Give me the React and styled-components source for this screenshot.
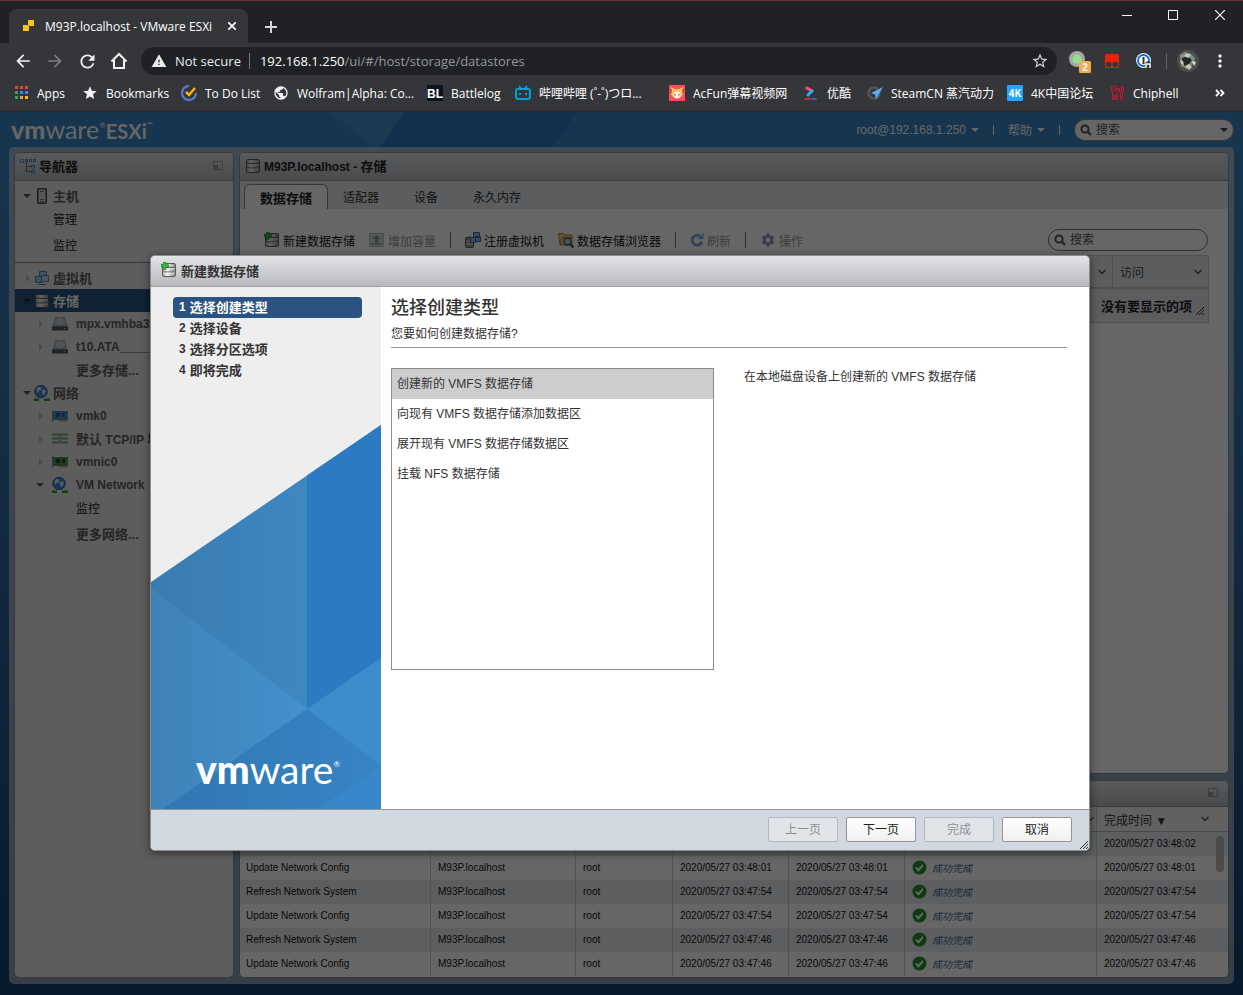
import React from 'react';
import styled, { createGlobalStyle, css } from 'styled-components';
import { MdArrowBack, MdArrowForward, MdRefresh, MdWarning, MdStarBorder, MdStar, MdMoreVert, MdPublic, MdSettings } from 'react-icons/md';

const uiFont = '"Liberation Sans", "Noto Sans CJK SC", sans-serif';
const chromeFont = '"Open Sans", "Noto Sans CJK SC", sans-serif';

const GlobalStyle = createGlobalStyle`
  *, *::before, *::after { box-sizing: border-box; }
  body { margin: 0; background: #202124; font-family: ${uiFont}; font-size: 12px; color: #000; }
  button, input { font: inherit; color: inherit; }
  button { border: 0; background: none; padding: 0; cursor: pointer; }
  ul { list-style: none; margin: 0; padding: 0; }
  a { color: inherit; text-decoration: none; }
  svg { display: block; flex: none; }
`;

const Window = styled.div`
  min-height: 100vh;
  display: flex;
  flex-direction: column;
  border-top: 1px solid #6b2f38;
`;

/* ---------- browser frame ---------- */

const TabStrip = styled.div`
  display: flex;
  align-items: flex-end;
  height: 42px;
  padding-left: 9px;
  background: #202124;
  font-family: ${chromeFont};
  color: #fff;
`;

const BrowserTab = styled.div`
  display: flex;
  align-items: center;
  width: 239px;
  height: 34px;
  padding: 0 10px 0 12px;
  border-radius: 8px 8px 0 0;
  background: #35363a;
  font-size: 12px;
`;

const TabTitle = styled.span`
  flex: 1;
  margin-left: 8px;
  white-space: nowrap;
  font-size: 12px;
`;

const IconButton = styled.button`
  display: flex;
  align-items: center;
  justify-content: center;
  width: ${p => p.$w || 32}px;
  height: ${p => p.$h || 32}px;
  color: ${p => (p.$muted ? '#7b7c7f' : '#f1f3f4')};
`;

const NewTab = styled(IconButton)`
  margin-left: 7px;
`;

const WindowButtons = styled.div`
  display: flex;
  align-self: flex-start;
  margin-left: auto;
`;

const AddressRow = styled.div`
  display: flex;
  align-items: center;
  height: 36px;
  padding: 0 2px 0 7px;
  background: #35363a;
  font-family: ${chromeFont};
`;

const Omnibox = styled.div`
  flex: 1;
  display: flex;
  align-items: center;
  height: 28px;
  margin: 0 7px 0 6px;
  padding: 0 8px 0 10px;
  border-radius: 14px;
  background: #202124;
  color: #e8eaed;
  font-size: 13px;
  white-space: nowrap;
`;

const Insecure = styled.span`
  margin: 0 10px 0 8px;
  padding-right: 8px;
  border-right: 1px solid #76777a;
  line-height: 16px;
`;

const Url = styled.span`
  flex: 1;
  color: #96989b;
  b { font-weight: 400; color: #fff; }
`;

const Divider = styled.i`
  width: 1px;
  height: 16px;
  margin: 0 10px 0 6px;
  background: #606164;
`;

const Bookmarks = styled.nav`
  display: flex;
  align-items: center;
  height: 33px;
  padding: 0 18px 4px 15px;
  border-bottom: 1px solid #28292c;
  background: #35363a;
  color: #fff;
  font-family: ${chromeFont};
  font-size: 12px;
  overflow: hidden;
`;

const Bookmark = styled.a`
  flex: 0 0 ${p => p.$w}px;
  display: flex;
  align-items: center;
  gap: 8px;
  white-space: nowrap;
`;

const More = styled.button`
  margin-left: auto;
`;

/* ---------- web client ---------- */

const Client = styled.div`
  position: relative;
  flex: 1;
  display: flex;
  flex-direction: column;
  padding: 0 9px 11px;
  background: linear-gradient(#3a85c2 0, #3a85c2 35px, #2d6ca3 45%, #14416e 100%);
`;

const HeaderArt = styled.svg`
  position: absolute;
  left: 0;
  top: 0;
`;

const ClientHeader = styled.header`
  position: relative;
  display: flex;
  align-items: center;
  height: 35px;
  padding-left: 2px;
  color: #fff;
`;

const Logo = styled.span`
  display: inline-flex;
  align-items: baseline;
  color: #fff;
  font-family: Lato, ${uiFont};
  font-size: ${p => p.$size}px;
  font-weight: 400;
  line-height: 1;
  b { font-weight: 900; }
  sup {
    align-self: flex-start;
    font-size: 8px;
    line-height: ${p => (p.$size > 30 ? 28 : 16)}px;
  }
  em { font-size: 20px; font-style: normal; font-weight: 700; }
`;

const HeaderStart = styled.div`
  flex: 1;
`;

const HeaderMenu = styled.button`
  display: flex;
  align-items: center;
  gap: 5px;
`;

const HeaderBar = styled.i`
  width: 1px;
  height: 10px;
  margin: 0 14px;
  background: #fff;
`;

const SearchBox = styled.label`
  display: flex;
  align-items: center;
  gap: 4px;
  width: 160px;
  height: 22px;
  padding: 0 5px;
  border: 1px solid ${p => (p.$dark ? '#777' : '#888')};
  border-radius: 11px;
  background: #fff;
  color: #555;
  input {
    flex: 1;
    min-width: 0;
    border: 0;
    outline: 0;
    padding: 0;
    background: none;
  }
  input::placeholder { color: #555; opacity: 1; }
`;

const Frame = styled.div`
  position: relative;
  flex: 1;
  display: grid;
  grid-template-columns: 220px minmax(0, 1fr);
  grid-template-rows: minmax(0, 1fr) 198px;
  gap: 6px 5px;
  padding: 5px 5px 6px;
  border-radius: 5px;
  background: linear-gradient(#9db8d0, #8c9bac);
`;

const Panel = styled.section`
  display: flex;
  flex-direction: column;
  border: 1px solid #8b8d90;
  border-radius: 5px;
  overflow: hidden;
  background: ${p => p.$bg || '#fff'};
  grid-row: ${p => (p.$tall ? 'span 2' : 'auto')};
`;

const PanelHeader = styled.header`
  flex: none;
  display: flex;
  align-items: center;
  gap: 3px;
  height: ${p => p.$h || 28}px;
  padding: 0 10px 2px 5px;
  border-bottom: 1px solid #909294;
  background: linear-gradient(#e0e2e5, #b8babd);
  color: #222;
  font-weight: 700;
  svg:last-child:not(:first-child), svg:only-child { margin-left: auto; }
`;

const PanelTitle = styled.span`
  font-size: 12px;
  white-space: nowrap;
`;

const Zh = styled.span`
  font-size: 13px;
`;

const Tree = styled.ul`
  padding: ${p => p.$top}px 0 4px;
  border-top: ${p => (p.$ruled ? '1px solid #888' : '0')};
`;

const TreeRow = styled.li`
  display: flex;
  align-items: center;
  height: ${p => (p.$tall ? 28 : 23)}px;
  padding-left: ${p => (p.$depth ? 20 : 7)}px;
  white-space: nowrap;
  font-weight: ${p => (p.$plain ? 400 : 700)};
  color: ${p => (p.$plain ? '#222' : '#5c5c5c')};
  ${p => p.$selected && css`
    background: #2a5381;
    color: #fff;
  `}
`;

const ArrowCell = styled.span`
  width: 10px;
  margin-right: ${p => (p.$depth ? 7 : 2)}px;
`;

const IconCell = styled.span`
  display: flex;
  justify-content: center;
  width: 16px;
  margin-right: ${p => (p.$depth ? 8 : 3)}px;
`;

const Tabs = styled.div`
  display: flex;
  align-items: flex-end;
  height: 28px;
  padding-left: 4px;
  background: #e5e8ec;
`;

const Tab = styled.button`
  height: 25px;
  padding: 0 20px 0 15px;
  font-size: 12px;
  color: #333;
  ${p => p.$active && css`
    padding: 0 15px;
    border: 1px solid #85878a;
    border-bottom: 0;
    border-radius: 6px 6px 0 0;
    background: #fff;
    color: #222;
    font-size: 13px;
    font-weight: 700;
  `}
`;

const Toolbar = styled.div`
  display: flex;
  align-items: center;
  gap: 14px;
  height: 46px;
  padding: 16px 20px 0 24px;
`;

const ToolButton = styled.button`
  display: flex;
  align-items: center;
  gap: 3px;
  white-space: nowrap;
  color: ${p => (p.disabled ? '#999' : '#111')};
`;

const ToolbarBar = styled.i`
  width: 1px;
  height: 16px;
  background: #777;
`;

const ToolbarEnd = styled.div`
  margin-left: auto;
`;

const Table = styled.table`
  table-layout: fixed;
  width: 100%;
  border-collapse: separate;
  border-spacing: 0;
  th, td { padding: 0; text-align: left; font-weight: 400; white-space: nowrap; }
`;

const GridWrap = styled.div`
  margin: 0 19px 0 19px;
  border: 1px solid #cacaca;
`;

const GridTable = styled(Table)`
  background: #e6e9ec;
  th { height: 33px; padding: 0 6px 0 7px; border-right: 1px solid #c4c6c8; border-bottom: 2px solid #c4c6c8; color: #444; }
  th:last-child { border-right: 0; }
  td { height: 33px; padding-right: 4px; }
`;

const HeadCell = styled.span`
  display: flex;
  align-items: center;
  justify-content: space-between;
  padding-right: ${p => p.$end || 0}px;
  svg:only-child { margin-left: auto; }
`;

const EmptyNote = styled.div`
  display: flex;
  justify-content: flex-end;
  align-items: center;
  gap: 4px;
  font-size: 13px;
  font-weight: 700;
  color: #222;
  svg { align-self: flex-end; }
`;

const TaskArea = styled.div`
  position: relative;
`;

const TaskTable = styled(Table)`
  font-size: 10px;
  th { height: 25px; padding-left: 7px; border-bottom: 1px solid #b4b6b8; background: #f2f2f2; font-size: 12px; color: #333; }
  th + th, td { border-left: 1px solid #ccc; }
  td { height: 24px; padding: 0 0 2px 7px; color: #111; }
  td:first-child { border-left: 0; padding-left: 6px; }
  tbody tr:nth-child(odd) td { background: #e8ebef; }
`;

const Result = styled.span`
  display: flex;
  align-items: center;
  gap: 5px;
  color: #3c6791;
  font-size: 10px;
  font-style: italic;
`;

const ScrollThumb = styled.div`
  position: absolute;
  right: 4px;
  top: 29px;
  width: 8px;
  height: 36px;
  border-radius: 4px;
  background: #bbb;
`;

/* ---------- dialog ---------- */

const Backdrop = styled.div`
  position: absolute;
  inset: 0;
  display: flex;
  align-items: center;
  justify-content: center;
  padding: 0 3px 1px 0;
  background: rgba(0, 0, 0, 0.6);
`;

const Dialog = styled.section`
  display: flex;
  flex-direction: column;
  width: min(940px, calc(100% - 40px));
  min-height: 596px;
  border: 1px solid #8c8c8c;
  border-radius: 5px;
  overflow: hidden;
  background: #fff;
  color: #333;
  box-shadow: 0 2px 8px rgba(0, 0, 0, 0.5);
`;

const DialogHeader = styled.header`
  display: flex;
  align-items: center;
  gap: 4px;
  height: 31px;
  padding: 0 0 2px 10px;
  border-bottom: 1px solid #a0a0a2;
  background: linear-gradient(#e2e4e7, #b8b9bd);
  font-size: 13px;
  font-weight: 700;
`;

const DialogBody = styled.div`
  flex: 1;
  display: flex;
`;

const Side = styled.aside`
  position: relative;
  display: flex;
  flex-direction: column;
  justify-content: space-between;
  width: 230px;
  background: #eee;
`;

const Steps = styled.ol`
  list-style: none;
  margin: 0;
  padding: 10px 19px 0 22px;
`;

const Step = styled.button`
  display: flex;
  align-items: center;
  gap: 4px;
  width: 100%;
  height: 21px;
  padding: 0 0 2px 6px;
  border-radius: 4px;
  font-size: 12px;
  font-weight: 700;
  color: ${p => (p.$active ? '#fff' : '#333')};
  background: ${p => (p.$active ? '#2a5381' : 'none')};
`;

const SideLogo = styled.div`
  position: absolute;
  left: 45px;
  bottom: 20px;
`;

const Content = styled.div`
  flex: 1;
  padding: 8px 22px 0 10px;
`;

const Title = styled.h1`
  margin: 0;
  font-family: ${uiFont};
  font-size: 18px;
  font-weight: 500;
  line-height: 26px;
`;

const Subtitle = styled.p`
  margin: 0;
  padding: 2px 0;
  border-bottom: 1px solid #929292;
  line-height: 22px;
`;

const Columns = styled.div`
  display: flex;
  gap: 30px;
  margin-top: 20px;
`;

const TypeList = styled.ul`
  width: 323px;
  height: 302px;
  border: 1px solid #8c8c8c;
`;

const TypeOption = styled.button`
  display: block;
  width: 100%;
  height: 30px;
  padding: 0 0 3px 5px;
  text-align: left;
  background: ${p => (p.$selected ? '#cdcdcd' : '#fff')};
`;

const Description = styled.p`
  margin: 0;
  line-height: 18px;
`;

const DialogFooter = styled.footer`
  position: relative;
  display: flex;
  align-items: center;
  justify-content: flex-end;
  gap: 8px;
  height: 41px;
  padding: 0 17px 2px 0;
  border-top: 1px solid #929496;
  background: #d1d8e0;
`;

const Grip = styled.span`
  position: absolute;
  right: 1px;
  bottom: 1px;
`;

const FooterButton = styled.button`
  width: 70px;
  height: 25px;
  padding-bottom: 2px;
  border: 1px solid #949494;
  border-radius: 2px;
  background: linear-gradient(#fff, #f0f0f0);
  color: #222;
  &:disabled { border-color: #b4b8be; background: #e1e5ea; color: #8e9196; }
`;

/* ---------- drawings ---------- */

const Caret = ({ color = '#fff' }) => (
  <svg width="8" height="4" viewBox="0 0 8 4"><path d="M0 0h8L4 4z" fill={color} /></svg>
);

const Arrow = ({ open, dark }) => (open
  ? <svg width="10" height="8" viewBox="0 0 10 8"><path d="M1 2h8L5 6z" fill={dark ? '#222' : '#555'} /></svg>
  : <svg width="10" height="10" viewBox="0 0 10 10"><path d="M4 1v8l4-4z" fill="#bbb" /></svg>);

const Chevron = () => (
  <svg width="8" height="6" viewBox="0 0 8 6"><path d="M0.5 1 4 4.500 7.500 1" fill="none" stroke="#555" strokeWidth="1.500" /></svg>
);

const Magnifier = () => (
  <svg width="12" height="12" viewBox="0 0 12 12" fill="none" stroke="#555" strokeWidth="2"><circle cx="5" cy="5" r="3.600" /><path d="m7.600 7.600 3.400 3.400" strokeWidth="2.400" /></svg>
);

const GripMark = () => (
  <svg width="8" height="8" viewBox="0 0 8 8"><path d="M0 8 8 0M3 8l5-5M6 8l2-2" stroke="#333" strokeWidth="1" /></svg>
);

const PanelToggle = () => (
  <svg width="10" height="9" viewBox="0 0 10 9"><path d="M.5.5h9v8h-9z" fill="none" stroke="#999" /><path d="M1 4h4v4H1z" fill="#999" /></svg>
);

const Disks = ({ plus }) => (
  <svg width="16" height="16" viewBox="0 0 16 16">
    <defs>
      <linearGradient id="metal">
        <stop offset="0" stopColor="#a2a2a2" />
        <stop offset=".35" stopColor="#f4f4f4" />
        <stop offset="1" stopColor="#8c8c8c" />
      </linearGradient>
    </defs>
    <rect x="1.500" y="1.500" width="13" height="13" rx="1.500" fill="url(#metal)" stroke="#5a5a5a" />
    <path d="M2 5.500h12M2 10h12" stroke="#5a5a5a" />
    <path d="M2 6.500h12M2 11h12" stroke="#fff" strokeWidth=".6" />
    {plus && <path d="M2.500 0h2.500v2.500h2.500V5H5v2.500H2.500V5H0V2.500h2.500z" fill="#35c03a" stroke="#1c7a22" strokeWidth=".6" />}
  </svg>
);

const NavIcon = () => (
  <svg width="16" height="16" viewBox="0 0 16 16" fill="none" stroke="#3c7fba">
    <path d="M.5 1.500h3v3h-3z" stroke="#44a0c8" /><path d="M5.500 1.500h2v2h-2zM9.500 1.500h2v2h-2zM13.500 1.500h2v2h-2z" />
    <path d="M6.500 4v9.500H11M6.500 8.500H11" stroke="#666" /><path d="M11.500 7.500h3v2.500h-3zM11.500 12.500h3V15h-3z" />
  </svg>
);

const HostIcon = () => (
  <svg width="10" height="16" viewBox="0 0 10 16"><rect x=".75" y=".75" width="8.500" height="14.500" rx="1" fill="#ddd" stroke="#444" strokeWidth="1.500" /><path d="M3 3.500h4M3 11.500h4M3 13.500h4" stroke="#555" strokeWidth=".8" /></svg>
);

const VmIcon = () => (
  <svg width="15" height="14" viewBox="0 0 15 14" fill="#a9cbe8" stroke="#4a86bf"><path d="M4.500.5h7v6h-7z" /><path d="M.5 5.500h7v6h-7z" /><path d="M6.500 4.500h7v6h-7z" fill="#c0d9ee" /><path d="M3 13.500h8" /></svg>
);

const DriveIcon = () => (
  <svg width="16" height="14" viewBox="0 0 16 14"><path d="M3 0h10l2.500 10H.500z" fill="#a4adb5" /><ellipse cx="8" cy="4.500" rx="5" ry="3.500" fill="#ccd4da" /><path d="M0 9.500h16v4H0z" fill="#50585d" /><path d="M11.500 11h2.500v1h-2.500z" fill="#4fd04f" /></svg>
);

const GlobeIcon = () => (
  <svg width="16" height="16" viewBox="0 0 16 16"><circle cx="7" cy="6.500" r="6.200" fill="#4f86d6" stroke="#2458a8" /><path d="M3 3q3-2 4 0t-2 3-1 3Q2 7 3 3zM8 5q3-1 4 1-1 3-3 4-1-2-1-5z" fill="#d9e8fb" /><path d="M0 13.500h16v2.500H0z" fill="#12a512" /><path d="M5 13h5v3H5z" fill="#eee" /></svg>
);

const CardIcon = ({ green }) => (
  <svg width="16" height="12" viewBox="0 0 16 12"><path d="M1 1h15v9H1z" fill={green ? '#4d9463' : '#4b8fcc'} /><path d="M0 0h1v12H0z" fill="#888" /><path d="M4 3h4v4H4zM10 3h3v4h-3z" fill={green ? '#26462f' : '#2a5f94'} /><path d="M7 10h8v1.500H7z" fill="#c8a850" /></svg>
);

const StackIcon = () => (
  <svg width="16" height="11" viewBox="0 0 16 11"><path d="M0 1.500h16M0 5.500h16M0 9.500h16" stroke="#6fae70" strokeWidth="2" /><path d="M6 0h4v11H6z" fill="#a9b0b8" opacity=".8" /></svg>
);

const GrowIcon = () => (
  <svg width="16" height="14" viewBox="0 0 16 14"><path d="M.5.5h14v13H.5z" fill="#d4dcd8" stroke="#b5bdb9" /><path d="M7.500 2 12 6H9v4H6V6H3z" fill="#8d9a94" /><path d="M2 11h11" stroke="#9aa" strokeWidth="2" /></svg>
);

const RegisterIcon = () => (
  <svg width="16" height="16" viewBox="0 0 16 16"><path d="M.5 6q4-2 8 0v9q-4 1.500-8 0z" fill="#999" stroke="#555" /><path d="M1 9h7M1 12h7" stroke="#eee" /><path d="M8.500.5h6v5h-6zM5.500 5.500h5v5h-5zM10.500 4.500h5v5h-5z" fill="#8ebce4" stroke="#2a6db0" /></svg>
);

const BrowseIcon = () => (
  <svg width="16" height="16" viewBox="0 0 16 16"><path d="M.5 1.500h5l1.500 1.500h7v10H2z" fill="#f2d58c" stroke="#ad8230" /><path d="M2 13 4 5.500h11.500" fill="none" stroke="#ad8230" /><circle cx="9.500" cy="9.500" r="3.500" fill="#b6d6ee" stroke="#557" strokeWidth="1.400" /><path d="m12 12 3.500 3.500" stroke="#445" strokeWidth="2" /></svg>
);

const SyncIcon = () => (
  <svg width="14" height="14" viewBox="0 0 14 14"><path d="M12 8.500A5 5 0 1 1 10 3" fill="none" stroke="#7fa8d4" strokeWidth="2.800" /><path d="M13.500 0v6h-6z" fill="#7fa8d4" /></svg>
);

const Check = () => (
  <svg width="15" height="15" viewBox="0 0 15 15"><circle cx="7.500" cy="7.500" r="7" fill="#22912c" /><path d="m4 7.500 2.500 2.700L11 5" fill="none" stroke="#fff" strokeWidth="2" /></svg>
);

const Art = () => (
  <svg width="230" height="384" viewBox="0 0 230 384">
    <defs>
      <linearGradient id="ga"><stop offset="0" stopColor="#3a7cb1" /><stop offset="1" stopColor="#3f8cc8" /></linearGradient>
      <linearGradient id="gb"><stop offset="0" stopColor="#3e82b8" /><stop offset="1" stopColor="#4391cd" /></linearGradient>
      <linearGradient id="gc"><stop offset="0" stopColor="#3077b2" /><stop offset="1" stopColor="#3784c5" /></linearGradient>
    </defs>
    <path d="M0 157 230 0v384H0z" fill="url(#ga)" />
    <path d="M156 50.500 230 0v233l-74 51z" fill="#2b7ac2" />
    <path d="M0 163 156 284 12 384H0z" fill="url(#gb)" />
    <path d="M156 284 230 336v48H12z" fill="url(#gc)" />
    <path d="M156 284 230 233v108z" fill="#3e8ccb" />
    <path d="M230 341v43h-63z" fill="#3987c8" />
  </svg>
);

const AppsIcon = () => (
  <svg width="14" height="14" viewBox="0 0 14 14"><path d="M0 0h3v3H0zM5 0h3v3H5zM10 0h3v3h-3z" fill="#ea4335" /><path d="M0 5h3v3H0zM0 10h3v3H0z" fill="#34a853" /><path d="M5 5h3v3H5zM10 5h3v3h-3z" fill="#4285f4" /><path d="M5 10h3v3H5z" fill="#e8a33d" /><path d="M10 10h3v3h-3z" fill="#fbbc05" /></svg>
);

const bookmarks = [
  ['Apps', 67, <AppsIcon />],
  ['Bookmarks', 99, <MdStar size={16} color="#f1f3f4" />],
  ['To Do List', 92, <svg width="16" height="16" viewBox="0 0 16 16" fill="none"><path d="M8 1a7 7 0 1 0 7 7" stroke="#5b7fe0" strokeWidth="2" /><path d="m5 7 3 3 6-7" stroke="#fdb10b" strokeWidth="2.500" /></svg>],
  ['Wolfram|Alpha: Co...', 154, <MdPublic size={16} color="#f1f3f4" />],
  ['Battlelog', 88, <svg width="16" height="16" viewBox="0 0 16 16"><path d="M0 0h16v16H0z" fill="#0b151f" /><text x="8" y="12.500" textAnchor="middle" fontSize="12" fontWeight="700" fontFamily="Liberation Sans, sans-serif" fill="#fff">BL</text></svg>],
  ['哔哩哔哩 (˚-˚)つロ...', 154, <svg width="16" height="16" viewBox="0 0 16 16" fill="none" stroke="#00a1d6" strokeWidth="2"><rect x="1" y="4" width="14" height="10" rx="2" /><path d="m4 1 2 2.500M12 1l-2 2.500M5 8v2M11 8v2" /></svg>],
  ['AcFun弹幕视频网', 134, <svg width="16" height="16" viewBox="0 0 16 16"><path d="M0 0h16v16H0z" fill="#fd4c5d" /><path d="m2 2 4 2h4l4-2v5q0 6-6 6T2 7z" fill="#f8c060" /><circle cx="8" cy="10" r="3.500" fill="#fff2e0" /><path d="M2 4v4M14 4v4M6 9v1.500M10 9v1.500" stroke="#70433a" /></svg>],
  ['优酷', 64, <svg width="16" height="16" viewBox="0 0 16 16" fill="none" strokeLinecap="round" strokeWidth="3"><path d="m4 3 5 3" stroke="#ff4a80" /><path d="m9 6-4 4" stroke="#25b4f0" /><path d="M2 14h5" stroke="#c2284e" strokeWidth="2" /><path d="M9 14h4" stroke="#1d6ea5" strokeWidth="2" /></svg>],
  ['SteamCN 蒸汽动力', 140, <svg width="16" height="16" viewBox="0 0 16 16"><circle cx="7" cy="8" r="5.500" fill="none" stroke="#555" strokeWidth="2.500" /><path d="M16 2 4 8l4 1.500L9 14z" fill="#58aef5" /></svg>],
  ['4K中国论坛', 102, <svg width="16" height="16" viewBox="0 0 16 16"><rect width="16" height="16" rx="1" fill="#23a5ff" /><text x="8" y="12" textAnchor="middle" fontSize="10" fontWeight="700" fontFamily="Open Sans, sans-serif" fill="#fff">4K</text></svg>],
  ['Chiphell', 70, <svg width="16" height="16" viewBox="0 0 16 16" fill="none" stroke="#d4122f"><path d="M5 1.500H2.500v4H5M6.500 0v6.500M6.500 3.500H9v3M10.500 3v4M12.500 8v-6h2v3.500h-2M3.500 7v8M3.500 10.500h2V15M9 9.500H7V14h2M7 11.500h2M11.500 8v6.500M13.500 8v7.500" /></svg>],
];

const tree = [
  { text: '虚拟机', icon: <VmIcon />, arrow: 'closed' },
  { text: '存储', icon: <Disks />, arrow: 'open', selected: true },
  { latin: 'mpx.vmhba32', icon: <DriveIcon />, arrow: 'closed', depth: 1 },
  { latin: 't10.ATA_____', icon: <DriveIcon />, arrow: 'closed', depth: 1 },
  { text: '更多存储...', depth: 1 },
  { text: '网络', icon: <GlobeIcon />, arrow: 'open' },
  { latin: 'vmk0', icon: <CardIcon />, arrow: 'closed', depth: 1 },
  { text: '默认', latin: 'TCP/IP 堆栈', icon: <StackIcon />, arrow: 'closed', depth: 1 },
  { latin: 'vmnic0', icon: <CardIcon green />, arrow: 'closed', depth: 1 },
  { latin: 'VM Network', icon: <GlobeIcon />, arrow: 'open', depth: 1 },
  { text: '监控', depth: 1, plain: true },
  { text: '更多网络...', depth: 1, tall: true },
];

const hostTree = [
  { text: '主机', icon: <HostIcon />, arrow: 'open' },
  { text: '管理', plain: true },
  { text: '监控', plain: true, tall: true },
];

const TreeItems = ({ items }) => items.map((r, i) => (
  <TreeRow key={i} $depth={r.depth} $plain={r.plain} $tall={r.tall} $selected={r.selected}>
    <ArrowCell $depth={r.depth}>{r.arrow && <Arrow open={r.arrow === 'open'} dark={r.selected} />}</ArrowCell>
    <IconCell $depth={r.depth}>{r.icon}</IconCell>
    <a href="#nav">{r.text && (r.plain ? r.text : <Zh>{r.text}</Zh>)}{r.text && r.latin && ' '}{r.latin}</a>
  </TreeRow>
));

const tasks = [
  ['', '03:48:02'],
  ['Update Network Config', '03:48:01'],
  ['Refresh Network System', '03:47:54'],
  ['Update Network Config', '03:47:54'],
  ['Refresh Network System', '03:47:46'],
  ['Update Network Config', '03:47:46'],
];

const steps = ['选择创建类型', '选择设备', '选择分区选项', '即将完成'];
const types = ['创建新的 VMFS 数据存储', '向现有 VMFS 数据存储添加数据区', '展开现有 VMFS 数据存储数据区', '挂载 NFS 数据存储'];

function Browser() {
  return (
    <>
      <TabStrip>
        <BrowserTab>
          <svg width="16" height="16" viewBox="0 0 16 16"><path d="M7 2h6v6H7zM2 7h6v6H2z" fill="#f8c518" /><path d="M7 7h1v1H7z" fill="#a97b00" /></svg>
          <TabTitle>M93P.localhost - VMware ESXi</TabTitle>
          <IconButton $w={12} $h={12} aria-label="Close tab"><svg width="8" height="8" viewBox="0 0 8 8"><path d="m0 0 8 8M8 0 0 8" stroke="#fff" strokeWidth="1.600" /></svg></IconButton>
        </BrowserTab>
        <NewTab aria-label="New tab"><svg width="12" height="12" viewBox="0 0 12 12"><path d="M6 0v12M0 6h12" stroke="#d5d6d8" strokeWidth="2" /></svg></NewTab>
        <WindowButtons>
          <IconButton $w={46} $h={28} aria-label="Minimize"><svg width="10" height="10" viewBox="0 0 10 10"><path d="M0 5.500h10" stroke="#fff" /></svg></IconButton>
          <IconButton $w={46} $h={28} aria-label="Maximize"><svg width="10" height="10" viewBox="0 0 10 10"><path d="M.5.5h9v9h-9z" fill="none" stroke="#fff" /></svg></IconButton>
          <IconButton $w={47} $h={28} aria-label="Close"><svg width="10" height="10" viewBox="0 0 10 10"><path d="m0 0 10 10M10 0 0 10" stroke="#fff" strokeWidth="1.200" /></svg></IconButton>
        </WindowButtons>
      </TabStrip>
      <AddressRow>
        <IconButton aria-label="Back"><MdArrowBack size={20} /></IconButton>
        <IconButton aria-label="Forward" $muted><MdArrowForward size={20} /></IconButton>
        <IconButton aria-label="Reload"><MdRefresh size={21} /></IconButton>
        <IconButton aria-label="Home"><svg width="18" height="18" viewBox="0 0 18 18"><path d="M1.500 9.500 9 2l7.500 7.500M4 8v8h10V8" fill="none" stroke="currentColor" strokeWidth="2" /></svg></IconButton>
        <Omnibox>
          <MdWarning size={16} />
          <Insecure>Not secure</Insecure>
          <Url><b>192.168.1.250</b>/ui/#/host/storage/datastores</Url>
          <MdStarBorder size={18} color="#d5d6d8" />
        </Omnibox>
        <IconButton aria-label="Extension"><svg width="22" height="24" viewBox="0 0 22 24"><circle cx="8" cy="10" r="8" fill="#a5a7a6" /><circle cx="8" cy="10" r="4.500" fill="#92df96" /><rect x="10" y="12" width="12" height="12" rx="1.500" fill="#f0ad4e" /><text x="16" y="22" textAnchor="middle" fontSize="10" fontWeight="700" fontFamily="Liberation Sans, sans-serif" fill="#fff">2</text></svg></IconButton>
        <IconButton aria-label="Extension"><svg width="14" height="14" viewBox="0 0 14 14"><rect width="14" height="14" rx="2" fill="#e8230c" /><circle cx="3.800" cy="10.500" r="2.800" fill="#35363a" /><circle cx="10.200" cy="10.500" r="2.800" fill="#35363a" /></svg></IconButton>
        <IconButton aria-label="Extension"><svg width="16" height="16" viewBox="0 0 16 16"><circle cx="7.500" cy="7.500" r="7.500" fill="#f1f3f4" /><circle cx="7.500" cy="7.500" r="5.500" fill="#fff" stroke="#1a6fd0" strokeWidth="2" /><path d="M7.500 4v7" stroke="#333" strokeWidth="2" /><path d="M9 16v-6l3-2 3 2v6z" fill="#35363a" /><path d="M10 15v-4h4v4" fill="none" stroke="#fff" strokeWidth="1.500" /></svg></IconButton>
        <Divider />
        <svg width="22" height="22" viewBox="0 0 22 22"><circle cx="11" cy="11" r="11" fill="#4b4f49" /><path d="M3 5 8 2l6 2 4 4-2 6-6 5-6-3z" fill="#8d8b7e" /><path d="m5 8 6-2 4 4-5 7-5-3z" fill="#22292b" /><path d="m7 6 3-3 4 2-3 3zM3 10l3 1 1 4-3-1z" fill="#c9c5b8" /><path d="M12 7h5l-2 3z" fill="#4d9dbb" /><path d="m8 16 4-2 3 3-3 3z" fill="#c9c5b8" /><path d="m15 11 4 1-2 4z" fill="#e0ddd2" /></svg>
        <IconButton $w={42} aria-label="Menu"><MdMoreVert size={20} /></IconButton>
      </AddressRow>
      <Bookmarks>
        {bookmarks.map(([label, w, icon]) => <Bookmark href="#bookmark" key={label} $w={w}>{icon}{label}</Bookmark>)}
        <More aria-label="More bookmarks"><svg width="10" height="8" viewBox="0 0 10 8"><path d="m1 1 3 3-3 3M5.500 1l3 3-3 3" fill="none" stroke="#fff" strokeWidth="1.800" /></svg></More>
      </Bookmarks>
    </>
  );
}

function Wizard() {
  return (
    <Backdrop>
      <Dialog role="dialog" aria-label="新建数据存储">
        <DialogHeader><Disks plus />新建数据存储</DialogHeader>
        <DialogBody>
          <Side>
            <Steps>
              {steps.map((s, i) => <li key={s}><Step $active={i === 0}>{i + 1}<Zh>{s}</Zh></Step></li>)}
            </Steps>
            <Art />
            <SideLogo><Logo $size={39}><b>vm</b>ware<sup>®</sup></Logo></SideLogo>
          </Side>
          <Content>
            <Title>选择创建类型</Title>
            <Subtitle>您要如何创建数据存储?</Subtitle>
            <Columns>
              <TypeList>
                {types.map((t, i) => <li key={t}><TypeOption $selected={i === 0} aria-pressed={i === 0}>{t}</TypeOption></li>)}
              </TypeList>
              <Description>在本地磁盘设备上创建新的 VMFS 数据存储</Description>
            </Columns>
          </Content>
        </DialogBody>
        <DialogFooter>
          <FooterButton disabled>上一页</FooterButton>
          <FooterButton>下一页</FooterButton>
          <FooterButton disabled>完成</FooterButton>
          <FooterButton>取消</FooterButton>
          <Grip><GripMark /></Grip>
        </DialogFooter>
      </Dialog>
    </Backdrop>
  );
}

function HostClient() {
  return (
    <>
      <HeaderArt width="700" height="35" viewBox="0 0 700 35" aria-hidden="true">
        <path d="M328 0h77l-25 35h-5z" fill="#4a8fc6" />
        <path d="M405 0h172l-24 35H380z" fill="#2878bd" />
      </HeaderArt>
      <ClientHeader>
        <HeaderStart><Logo $size={25}><b>vm</b>ware<sup>®</sup><em>ESXi</em><sup>™</sup></Logo></HeaderStart>
        <HeaderMenu>root@192.168.1.250<Caret /></HeaderMenu>
        <HeaderBar />
        <HeaderMenu>帮助<Caret /></HeaderMenu>
        <HeaderBar />
        <SearchBox><Magnifier /><input placeholder="搜索" aria-label="搜索" /><Caret color="#444" /></SearchBox>
      </ClientHeader>
      <Frame>
        <Panel $tall $bg="#e8e9eb">
          <PanelHeader><NavIcon /><Zh>导航器</Zh><PanelToggle /></PanelHeader>
          <Tree $top={3}><TreeItems items={hostTree} /></Tree>
          <Tree $top={3} $ruled><TreeItems items={tree} /></Tree>
        </Panel>
        <Panel>
          <PanelHeader>
            <Disks />
            <PanelTitle>M93P.localhost - <Zh>存储</Zh></PanelTitle>
          </PanelHeader>
          <Tabs>
            <Tab $active>数据存储</Tab>
            <Tab>适配器</Tab>
            <Tab>设备</Tab>
            <Tab>永久内存</Tab>
          </Tabs>
          <Toolbar>
            <ToolButton><Disks plus />新建数据存储</ToolButton>
            <ToolButton disabled><GrowIcon />增加容量</ToolButton>
            <ToolbarBar />
            <ToolButton><RegisterIcon />注册虚拟机</ToolButton>
            <ToolButton><BrowseIcon />数据存储浏览器</ToolButton>
            <ToolbarBar />
            <ToolButton disabled><SyncIcon />刷新</ToolButton>
            <ToolbarBar />
            <ToolButton disabled><MdSettings size={16} color="#8899b5" />操作</ToolButton>
            <ToolbarEnd><SearchBox $dark><Magnifier /><input placeholder="搜索" aria-label="搜索" /></SearchBox></ToolbarEnd>
          </Toolbar>
          <GridWrap>
            <GridTable>
              <colgroup><col /><col width="95" /></colgroup>
              <thead><tr>
                <th><HeadCell><Chevron /></HeadCell></th>
                <th><HeadCell>访问<Chevron /></HeadCell></th>
              </tr></thead>
              <tbody><tr><td colSpan="2"><EmptyNote>没有要显示的项<GripMark /></EmptyNote></td></tr></tbody>
            </GridTable>
          </GridWrap>
        </Panel>
        <Panel>
          <PanelHeader $h={26}><PanelToggle /></PanelHeader>
          <TaskArea>
            <TaskTable>
              <colgroup><col /><col width="145" /><col width="97" /><col width="116" /><col width="116" /><col width="192" /><col width="132" /></colgroup>
              <thead><tr>
                <th /><th /><th /><th /><th />
                <th><HeadCell $end={2}><Chevron /></HeadCell></th>
                <th><HeadCell $end={19}>完成时间 ▼<Chevron /></HeadCell></th>
              </tr></thead>
              <tbody>
                {tasks.map(([name, time], i) => (
                  <tr key={i}>
                    <td>{name}</td>
                    <td>{name && 'M93P.localhost'}</td>
                    <td>{name && 'root'}</td>
                    <td>{name && `2020/05/27 ${time}`}</td>
                    <td>{name && `2020/05/27 ${time}`}</td>
                    <td>{name && <Result><Check />成功完成</Result>}</td>
                    <td>{`2020/05/27 ${time}`}</td>
                  </tr>
                ))}
              </tbody>
            </TaskTable>
            <ScrollThumb />
          </TaskArea>
        </Panel>
      </Frame>
    </>
  );
}

export default function App() {
  return (
    <Window>
      <GlobalStyle />
      <Browser />
      <Client>
        <HostClient />
        <Wizard />
      </Client>
    </Window>
  );
}
